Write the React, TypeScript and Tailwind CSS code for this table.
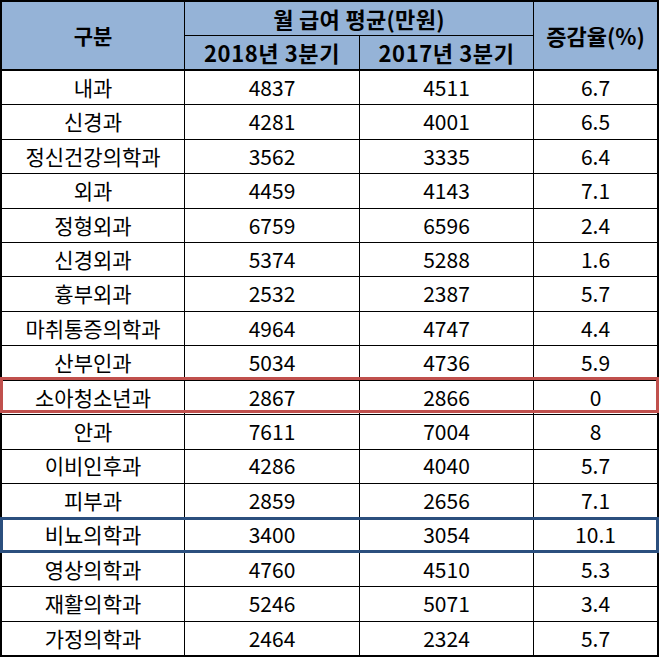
import React from "react";

const rows: [string, string, string, string][] = [
  ["내과", "4837", "4511", "6.7"],
  ["신경과", "4281", "4001", "6.5"],
  ["정신건강의학과", "3562", "3335", "6.4"],
  ["외과", "4459", "4143", "7.1"],
  ["정형외과", "6759", "6596", "2.4"],
  ["신경외과", "5374", "5288", "1.6"],
  ["흉부외과", "2532", "2387", "5.7"],
  ["마취통증의학과", "4964", "4747", "4.4"],
  ["산부인과", "5034", "4736", "5.9"],
  ["소아청소년과", "2867", "2866", "0"],
  ["안과", "7611", "7004", "8"],
  ["이비인후과", "4286", "4040", "5.7"],
  ["피부과", "2859", "2656", "7.1"],
  ["비뇨의학과", "3400", "3054", "10.1"],
  ["영상의학과", "4760", "4510", "5.3"],
  ["재활의학과", "5246", "5071", "3.4"],
  ["가정의학과", "2464", "2324", "5.7"],
];

export default function App() {
  return (
    <div
      className="w-[662px] h-[659px] bg-white text-black"
      style={{ fontFamily: '"Noto Sans CJK KR", "Noto Sans", sans-serif' }}
    >
      <div className="relative w-[659px]">
        <div className="border-2 border-black bg-black flex flex-col">
          <div className="grid grid-cols-[182px_174px_173px_123px] grid-rows-[33px_33px] gap-px bg-black">
            <div className="row-span-2 bg-[#95B3D7] flex items-center justify-center text-[21px] font-bold">
              구분
            </div>
            <div className="col-span-2 bg-[#95B3D7] flex items-center justify-center text-[22px] font-bold tracking-[0.3px]">
              월 급여 평균(만원)
            </div>
            <div className="row-span-2 bg-[#95B3D7] flex items-center justify-center text-[22px] font-bold">
              증감율(%)
            </div>
            <div className="bg-[#95B3D7] flex items-center justify-center text-[22px] font-bold tracking-[0.6px]">
              2018년 3분기
            </div>
            <div className="bg-[#95B3D7] flex items-center justify-center text-[22px] font-bold tracking-[0.6px]">
              2017년 3분기
            </div>
          </div>
          <div className="mt-[2px] h-[584px] grid grid-cols-[182px_174px_173px_123px] grid-rows-[repeat(17,minmax(0,1fr))] gap-px bg-black">
            {rows.map((r, i) => (
              <React.Fragment key={i}>
                <div className="bg-white flex items-center justify-center text-[21px]">{r[0]}</div>
                <div className="bg-white flex items-center justify-center text-[21px]">{r[1]}</div>
                <div className="bg-white flex items-center justify-center text-[21px]">{r[2]}</div>
                <div className="bg-white flex items-center justify-center text-[21px]">{r[3]}</div>
              </React.Fragment>
            ))}
          </div>
        </div>
        <div className="absolute left-0 top-[377px] w-[659px] h-[36px] border-[3px] border-[#C0504D] pointer-events-none" />
        <div className="absolute left-0 top-[517px] w-[659px] h-[36px] border-[3px] border-[#2B4F7E] pointer-events-none" />
      </div>
    </div>
  );
}
